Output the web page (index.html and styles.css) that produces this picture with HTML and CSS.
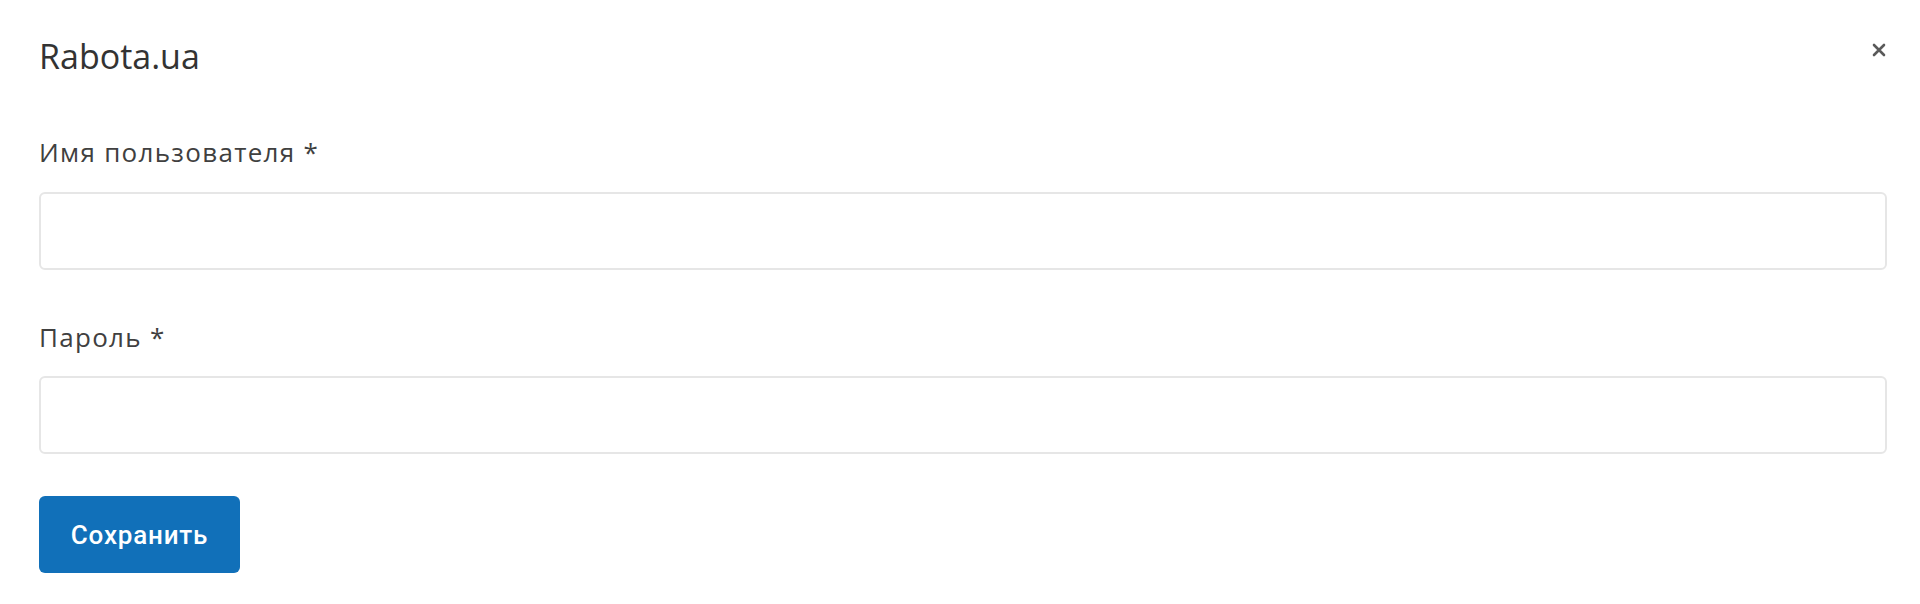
FILE: index.html
```html
<!DOCTYPE html>
<html lang="ru">
<head>
  <meta charset="UTF-8">
  <meta name="viewport" content="width=device-width, initial-scale=1.0">
  <title>Rabota.ua</title>
  <link rel="stylesheet" href="styles.css">
</head>
<body>
  <div class="dialog">
    <div class="dialog-header">
      <h1 class="dialog-title">Rabota.ua</h1>
      <button class="close-btn" aria-label="Закрыть">
        <svg width="14" height="14" viewBox="0 0 14 14">
          <path d="M2 2 L12 12 M12 2 L2 12" stroke="#5a5a5a" stroke-width="2.6" stroke-linecap="round"/>
        </svg>
      </button>
    </div>

    <form class="login-form">
      <label class="field-label" for="username">Имя пользователя *</label>
      <input class="field-input" id="username" type="text">

      <label class="field-label second" for="password">Пароль *</label>
      <input class="field-input" id="password" type="password">

      <div class="actions">
        <button class="save-btn" type="button">Сохранить</button>
      </div>
    </form>
  </div>
</body>
</html>
```

FILE: styles.css
```css
body {
  margin: 0;
  padding: 0;
  background-color: #fff;
  font-family: "Open Sans", "Noto Sans", sans-serif;
  color: #3a3a3a;
}

.dialog {
  padding: 36px 33px 0 39px;
}

.dialog-header {
  display: flex;
  justify-content: space-between;
  align-items: flex-start;
}

.dialog-title {
  margin: 0;
  font-size: 34px;
  font-weight: 400;
  line-height: 40px;
  color: #333;
}

.close-btn {
  margin-top: 7px;
  margin-right: 1px;
  padding: 0;
  border: none;
  background: none;
  cursor: pointer;
  display: flex;
}

.login-form {
  display: flex;
  flex-direction: column;
  margin-top: 60px;
}

.field-label {
  font-size: 26px;
  letter-spacing: 1.3px;
  line-height: 32px;
  color: #404040;
  margin-bottom: 24px;
}

.field-label.second {
  margin-top: 51px;
  margin-bottom: 23px;
}

.field-input {
  box-sizing: border-box;
  height: 78px;
  width: 100%;
  margin: 0;
  border: 2px solid #e6e6e6;
  border-radius: 6px;
  background: #fff;
  font-size: 24px;
  padding: 0 16px;
  outline: none;
}

.actions {
  margin-top: 42px;
}

.save-btn {
  width: 201px;
  height: 77px;
  border: none;
  border-radius: 6px;
  background-color: #1170b9;
  color: #fff;
  font-family: Roboto, "Open Sans", sans-serif;
  font-size: 26px;
  letter-spacing: 0.8px;
  font-weight: 500;
  cursor: pointer;
}
```
